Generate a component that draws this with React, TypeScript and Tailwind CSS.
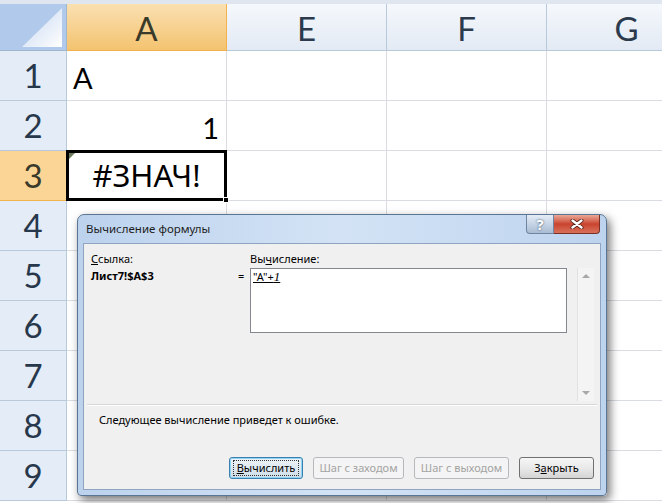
import React from "react";

const cols = ["A", "E", "F", "G"];
const rows = [1, 2, 3, 4, 5, 6, 7, 8, 9];

function CornerCell() {
  return (
    <div className="relative border-r border-b border-[#9eb6ce] bg-[#b1c9ea]">
      <svg viewBox="0 0 66 46" className="absolute inset-0 h-full w-full" aria-hidden="true">
        <defs>
          <linearGradient id="tri" x1="0" y1="0" x2="1" y2="1">
            <stop offset="0" stopColor="#c2d5ef" />
            <stop offset="1" stopColor="#ffffff" />
          </linearGradient>
        </defs>
        <path d="M22 43 L62 4 L62 43 Z" fill="url(#tri)" />
      </svg>
    </div>
  );
}

function ColHeader({ label }: { label: string }) {
  const active = label === "A";
  return (
    <div
      className={
        active
          ? "flex items-center justify-center border-r border-b border-[#f2b24e] bg-gradient-to-b from-[#fae0b1] to-[#f3c36f] text-[33px] text-[#3a3a2a]"
          : "flex items-center justify-center border-r border-b border-[#b9c9dc] bg-gradient-to-b from-[#f5f8fc] to-[#e3eaf4] text-[33px] text-[#2b3a4d]"
      }
    >
      <span className="translate-y-[2px]">{label}</span>
    </div>
  );
}

function RowHeader({ n }: { n: number }) {
  const active = n === 3;
  return (
    <div
      className={
        active
          ? "flex items-center justify-center border-r border-b border-[#f2b24e] bg-[#fbd595] text-[33px] text-[#3a3a2a]"
          : "flex items-center justify-center border-r border-b border-[#b9c9dc] bg-[#e4ecf7] text-[33px] text-[#27384c]"
      }
    >
      {n}
    </div>
  );
}

function Cell({ r, c }: { r: number; c: string }) {
  if (c === "A" && r === 1) {
    return (
      <div className="flex items-center border-r border-b border-[#d9dde3] pl-[6px] pt-[4px] text-[29px] text-black">A</div>
    );
  }
  if (c === "A" && r === 2) {
    return (
      <div className="flex items-center justify-end border-r border-b border-[#d9dde3] pr-[7px] pt-[4px] text-[29px] text-black">1</div>
    );
  }
  if (c === "A" && r === 3) {
    return (
      <div className="relative flex items-center justify-center border-r border-b border-[#d9dde3] text-black">
        <div className="pointer-events-none absolute -top-[1px] -left-[1px] -right-[1px] -bottom-[1px] border-[3px] border-black" />
        <div className="absolute -bottom-[3px] -right-[3px] h-[6px] w-[6px] border border-white bg-black" />
        <svg viewBox="0 0 6 6" className="absolute top-[2px] left-[2px] h-[6px] w-[6px]" aria-hidden="true">
          <path d="M0 0 L6 0 L0 6 Z" fill="#6d7a5a" />
        </svg>
        <span className="font-['Noto_Sans',sans-serif] text-[31px]">#ЗНАЧ!</span>
      </div>
    );
  }
  return <div className="border-r border-b border-[#d9dde3]" />;
}

function Btn({
  children,
  w,
  kind,
}: {
  children: React.ReactNode;
  w: string;
  kind: "default" | "disabled" | "normal";
}) {
  if (kind === "default") {
    return (
      <div className={`${w} flex h-[22px] items-center justify-center rounded-[3px] border border-[#3c7fb1] bg-gradient-to-b from-[#eef4f8] to-[#cfdde8] shadow-[inset_0_0_0_1px_#8fd6f4]`}>
        <span className="border border-dotted border-[#333] px-[3px] leading-[14px]">{children}</span>
      </div>
    );
  }
  if (kind === "disabled") {
    return (
      <div className={`${w} flex h-[22px] items-center justify-center rounded-[3px] border border-[#b5b9bc] bg-[#f4f4f4] text-[#a3a3a3]`}>
        {children}
      </div>
    );
  }
  return (
    <div className={`${w} flex h-[22px] items-center justify-center rounded-[3px] border border-[#707070] bg-gradient-to-b from-[#f6f6f6] via-[#e9e9e9] to-[#d4d4d4]`}>
      {children}
    </div>
  );
}

function Dialog() {
  return (
    <div className="absolute left-[77px] top-[214px] flex h-[282px] w-[530px] flex-col rounded-t-[7px] rounded-b-[4px] border border-[#5b7594] bg-gradient-to-r from-[#bcd2ed] via-[#d3e3f5] to-[#bdd3ee] shadow-[3px_4px_10px_rgba(0,0,0,0.55)] font-['Noto_Sans',sans-serif] text-[11px] text-black">
      <div className="flex h-[28px] shrink-0 items-start">
        <span className="ml-[8px] mt-[6px] text-[11.5px] leading-[16px] text-[#1e1e1e]">Вычисление формулы</span>
        <div className="ml-auto mr-[6px] flex h-[19px]">
          <div className="flex w-[28px] items-center justify-center rounded-bl-[4px] border border-t-0 border-[#6f84a0] bg-gradient-to-b from-[#e4ecf6] to-[#a9bcd3] text-[15px] font-bold leading-none text-white [text-shadow:0_0_2px_#2f3f56]">
            ?
          </div>
          <div className="flex w-[46px] items-center justify-center rounded-br-[4px] border border-t-0 border-l-0 border-[#7a2f25] bg-gradient-to-b from-[#eaa798] via-[#c9432f] to-[#d8705a]">
            <svg viewBox="0 0 14 10" className="h-[10px] w-[14px]" aria-hidden="true">
              <path d="M2.5 1.5 L11.5 8.5 M11.5 1.5 L2.5 8.5" stroke="#4a1a14" strokeWidth="4" strokeLinecap="round" />
              <path d="M2.5 1.5 L11.5 8.5 M11.5 1.5 L2.5 8.5" stroke="#ffffff" strokeWidth="2.4" strokeLinecap="round" />
            </svg>
          </div>
        </div>
      </div>
      <div className="mx-[5px] mb-[5px] flex flex-1 flex-col border border-[#8ea4c1] bg-[#f0f0f0]">
        <div className="flex h-[160px] shrink-0 pl-[7px] pt-[7px]">
          <div className="w-[147px] shrink-0">
            <div className="leading-[16px]">
              <span className="underline">С</span>сылка:
            </div>
            <div className="mt-[1px] font-bold leading-[16px]">Лист7!$A$3</div>
          </div>
          <div className="mt-[17px] w-[12px] shrink-0 leading-[16px]">=</div>
          <div className="w-[317px] shrink-0">
            <div className="leading-[16px]">
              Вы<span className="underline">ч</span>исление:
            </div>
            <div className="mt-[1px] h-[65px] border border-[#828790] bg-white px-[2px] leading-[16px]">
              <span className="underline">
                "A"+<i className="font-['Liberation_Serif',serif] text-[13px]">1</i>
              </span>
            </div>
          </div>
          <div className="mb-[3px] ml-[10px] mt-[17px] flex w-[17px] flex-col items-center justify-between border-l border-[#e2e2e2] bg-[#f4f4f4] py-[6px]">
            <svg viewBox="0 0 8 4" className="h-[4px] w-[8px]" aria-hidden="true">
              <path d="M0 4 L4 0 L8 4 Z" fill="#a8a8a8" />
            </svg>
            <svg viewBox="0 0 8 4" className="h-[4px] w-[8px]" aria-hidden="true">
              <path d="M0 0 L8 0 L4 4 Z" fill="#a8a8a8" />
            </svg>
          </div>
        </div>
        <div className="mx-[3px] border-t border-[#d8d8d8] border-b border-b-white" />
        <div className="ml-[15px] mt-[6px] leading-[16px]">Следующее вычисление приведет к ошибке.</div>
        <div className="mt-auto mb-[10px] mr-[6px] flex justify-end gap-[10px]">
          <Btn w="w-[74px]" kind="default">
            <span className="underline">В</span>ычислить
          </Btn>
          <Btn w="w-[91px]" kind="disabled">
            Шаг с заходом
          </Btn>
          <Btn w="w-[95px]" kind="disabled">
            Шаг с выходом
          </Btn>
          <Btn w="w-[75px]" kind="normal">
            З<span className="underline">а</span>крыть
          </Btn>
        </div>
      </div>
    </div>
  );
}

export default function App() {
  return (
    <div className="relative h-[503px] w-[662px] overflow-hidden bg-white font-['Lato','Noto_Sans',sans-serif]">
      <div className="h-[4px] bg-[#dfe6ef]" />
      <div className="grid grid-cols-[67px_160px_160px_160px_160px] grid-rows-[47px_repeat(9,50px)]">
        <CornerCell />
        {cols.map((c) => (
          <ColHeader key={c} label={c} />
        ))}
        {rows.map((r) => (
          <React.Fragment key={r}>
            <RowHeader n={r} />
            {cols.map((c) => (
              <Cell key={c} r={r} c={c} />
            ))}
          </React.Fragment>
        ))}
      </div>
      <Dialog />
    </div>
  );
}
